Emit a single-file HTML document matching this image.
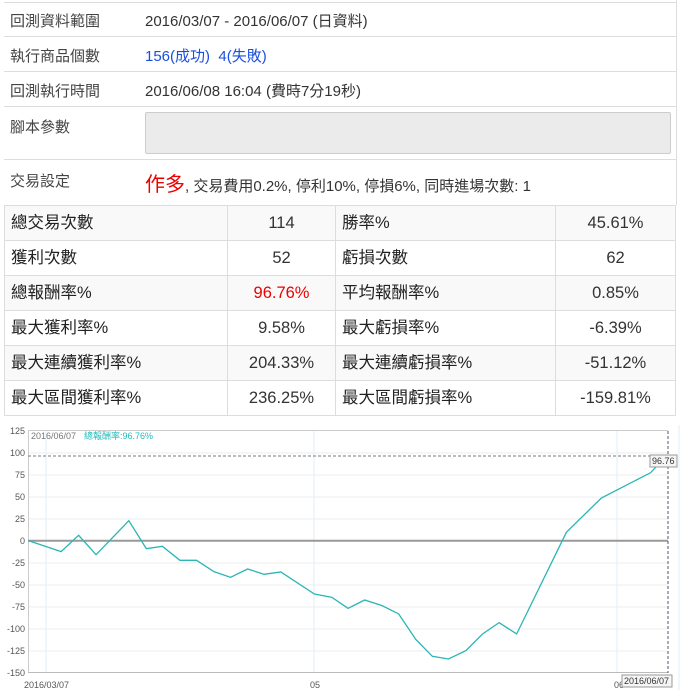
<!DOCTYPE html>
<html><head><meta charset="utf-8"><style>
body{margin:0;width:685px;height:690px;background:#fff;font-family:"Liberation Sans","Noto Sans CJK TC",sans-serif;color:#333;position:relative;overflow:hidden}
.a{position:absolute}
.hl{position:absolute;left:4px;width:672px;height:1px;background:#ddd}
.lab{position:absolute;left:10px;font-size:15px;color:#444}
.val{position:absolute;left:145px;font-size:15px;color:#333}
table{position:absolute;left:4px;top:205px;width:672px;border-collapse:collapse;font-size:16.5px;table-layout:fixed}
td{border:1px solid #ddd;height:35px;padding:2px 0 0 6px;color:#222;vertical-align:top;box-sizing:border-box;line-height:31px;overflow:hidden}
td.c{text-align:center;padding:2px 0 0 0;color:#333}
tr:nth-child(odd) td{background:#f9f9f9}
</style></head><body>
<div class="hl" style="top:2px"></div>
<div class="a" style="left:676px;top:0;width:1px;height:205px;background:#ddd"></div>
<div class="lab" style="top:10px">回測資料範圍</div><div class="val" style="top:10px">2016/03/07 - 2016/06/07 (日資料)</div>
<div class="hl" style="top:36px"></div>
<div class="lab" style="top:45px">執行商品個數</div><div class="val" style="top:45px;color:#1a4fe0">156(成功)&nbsp; 4(失敗)</div>
<div class="hl" style="top:71px"></div>
<div class="lab" style="top:80px">回測執行時間</div><div class="val" style="top:80px">2016/06/08 16:04 (費時7分19秒)</div>
<div class="hl" style="top:106px"></div>
<div class="lab" style="top:116px">腳本參數</div>
<div class="a" style="left:145px;top:112px;width:524px;height:40px;background:#ebebeb;border:1px solid #ccc;border-radius:2px"></div>
<div class="hl" style="top:159px"></div>
<div class="lab" style="top:170px">交易設定</div>
<div class="val" style="top:168px"><span style="color:#e00;font-size:20px">作多</span>, 交易費用0.2%, 停利10%, 停損6%, 同時進場次數: 1</div>
<table>
<colgroup><col style="width:223px"><col style="width:108px"><col style="width:220px"><col></colgroup>
<tr><td>總交易次數</td><td class="c">114</td><td>勝率%</td><td class="c">45.61%</td></tr>
<tr><td>獲利次數</td><td class="c">52</td><td>虧損次數</td><td class="c">62</td></tr>
<tr><td>總報酬率%</td><td class="c" style="color:#e00">96.76%</td><td>平均報酬率%</td><td class="c">0.85%</td></tr>
<tr><td>最大獲利率%</td><td class="c">9.58%</td><td>最大虧損率%</td><td class="c">-6.39%</td></tr>
<tr><td>最大連續獲利率%</td><td class="c">204.33%</td><td>最大連續虧損率%</td><td class="c">-51.12%</td></tr>
<tr><td>最大區間獲利率%</td><td class="c">236.25%</td><td>最大區間虧損率%</td><td class="c">-159.81%</td></tr>
</table>
<svg class="a" style="left:0;top:0" width="685" height="690" font-family="Liberation Sans, Noto Sans CJK TC, sans-serif" font-size="9" fill="#555">
<g stroke="#eee" stroke-width="1">
<line x1="28" y1="453" x2="668" y2="453"/><line x1="28" y1="475" x2="668" y2="475"/><line x1="28" y1="497" x2="668" y2="497"/><line x1="28" y1="519" x2="668" y2="519"/><line x1="28" y1="563" x2="668" y2="563"/><line x1="28" y1="585" x2="668" y2="585"/><line x1="28" y1="607" x2="668" y2="607"/><line x1="28" y1="629" x2="668" y2="629"/><line x1="28" y1="651" x2="668" y2="651"/>
</g>
<g stroke="#e3eef5"><line x1="46" y1="431" x2="46" y2="673"/><line x1="314" y1="431" x2="314" y2="673"/><line x1="617" y1="431" x2="617" y2="673"/><line x1="679" y1="425" x2="679" y2="690"/></g>
<line x1="28" y1="430.5" x2="668" y2="430.5" stroke="#ccc"/>
<line x1="28.5" y1="430" x2="28.5" y2="673" stroke="#ccc"/>
<line x1="28" y1="672.5" x2="668" y2="672.5" stroke="#bbb"/>
<line x1="28" y1="540.7" x2="668" y2="540.7" stroke="#999" stroke-width="2"/>
<line x1="28" y1="456" x2="668" y2="456" stroke="#778" stroke-dasharray="3,2"/>
<line x1="668" y1="431" x2="668" y2="673" stroke="#556" stroke-dasharray="3,2"/>
<g text-anchor="end">
<text x="25" y="434">125</text><text x="25" y="456">100</text><text x="25" y="478">75</text><text x="25" y="500">50</text><text x="25" y="522">25</text><text x="25" y="544">0</text><text x="25" y="566">-25</text><text x="25" y="588">-50</text><text x="25" y="610">-75</text><text x="25" y="632">-100</text><text x="25" y="654">-125</text><text x="25" y="676">-150</text>
</g>
<text x="31" y="439" fill="#777">2016/06/07</text>
<text x="84" y="439" fill="#2bb">總報酬率:96.76%</text>
<g transform="translate(0,420) scale(0.4367,0.3333)">
<polyline fill="none" stroke="#2bb5b5" stroke-width="1.3" vector-effect="non-scaling-stroke" points="65,362 140,395 180,346 220,404 295,302 335,386 372,379 412,421 450,421 490,455 528,472 567,447 605,463 643,456 720,522 760,532 797,565 835,540 875,557 913,582 952,658 990,709 1027,717 1067,692 1105,642 1143,608 1183,642 1297,337 1377,234 1490,158 1528,104"/>
</g>
<rect x="650" y="455" width="27" height="12" fill="#f5f5f5" stroke="#999"/>
<text x="652" y="464" fill="#333">96.76</text>
<text x="24" y="688">2016/03/07</text>
<text x="310" y="688">05</text>
<text x="614" y="688">06</text>
<rect x="622" y="675" width="50" height="12" fill="#f5f5f5" stroke="#999"/>
<text x="624" y="684" fill="#333">2016/06/07</text>
</svg>
</body></html>
